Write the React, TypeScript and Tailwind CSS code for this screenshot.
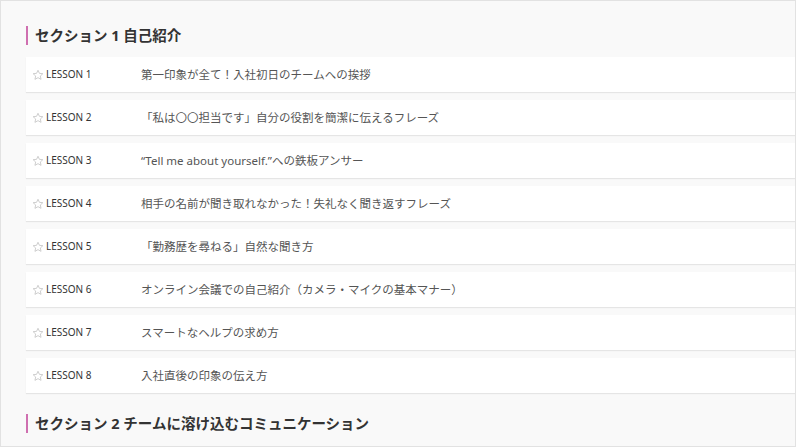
const lessons = [
  "第一印象が全て！入社初日のチームへの挨拶",
  "「私は〇〇担当です」自分の役割を簡潔に伝えるフレーズ",
  "“Tell me about yourself.”への鉄板アンサー",
  "相手の名前が聞き取れなかった！失礼なく聞き返すフレーズ",
  "「勤務歴を尋ねる」自然な聞き方",
  "オンライン会議での自己紹介（カメラ・マイクの基本マナー）",
  "スマートなヘルプの求め方",
  "入社直後の印象の伝え方",
];

function Star() {
  return (
    <svg width="12" height="12" viewBox="0 0 24 24" fill="none" stroke="#c8c8c8" strokeWidth="1.8" strokeLinejoin="round">
      <path d="M12 2.5l2.9 6.2 6.8.7-5.1 4.6 1.5 6.7L12 17.3l-6.1 3.4 1.5-6.7-5.1-4.6 6.8-.7z" />
    </svg>
  );
}

function SectionTitle({ text }: { text: string }) {
  return (
    <div className="flex items-center h-[19px] border-l-2 border-[#cf6fb0] pl-[7px]">
      <span className="text-[14.5px] font-bold text-[#333] leading-none">{text}</span>
    </div>
  );
}

export default function App() {
  return (
    <div
      className="w-[796px] h-[447px] overflow-hidden bg-[#f9f9f9] border border-[#e2e2e2] pl-[25px] pt-[25px]"
      style={{ fontFamily: '"Noto Sans", "Noto Sans CJK JP", sans-serif' }}
    >
      <SectionTitle text="セクション 1 自己紹介" />
      <div className="mt-[12px] flex flex-col gap-[8px]">
        {lessons.map((t, i) => (
          <div
            key={i}
            className="flex items-center h-[35px] bg-white shadow-[0_1px_1px_rgba(0,0,0,0.08)] pl-[6px]"
          >
            <Star />
            <span className="ml-[2px] w-[95px] text-[10px] text-[#333]">LESSON {i + 1}</span>
            <span className="text-[11.5px] text-[#555]">{t}</span>
          </div>
        ))}
      </div>
      <div className="mt-[21px]">
        <SectionTitle text="セクション 2 チームに溶け込むコミュニケーション" />
      </div>
    </div>
  );
}
